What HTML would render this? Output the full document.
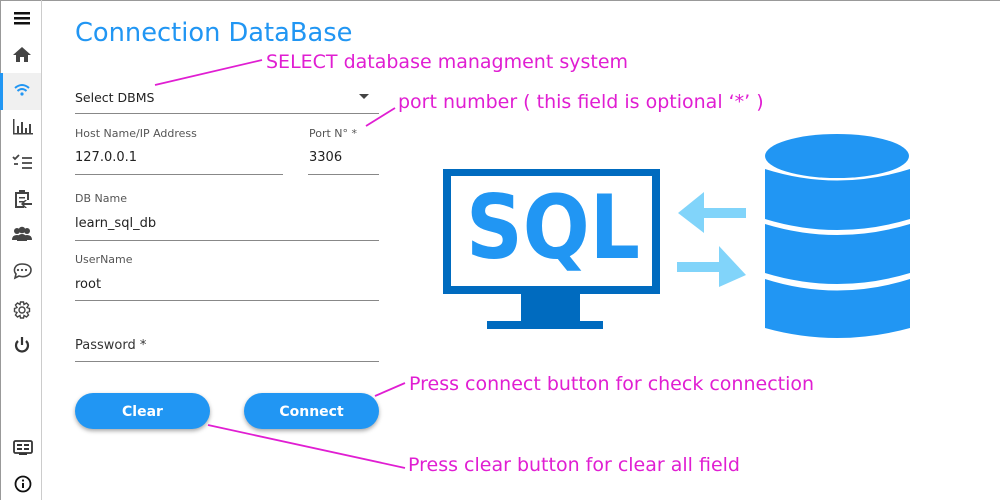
<!DOCTYPE html>
<html><head><meta charset="utf-8"><style>
*{margin:0;padding:0;box-sizing:border-box}
body{width:1000px;height:500px;position:relative;background:#fff;font-family:"DejaVu Sans","Liberation Sans",sans-serif;overflow:hidden}
.frame{position:absolute;left:0;top:0;width:1000px;height:500px;border-top:1px solid #999;border-left:1px solid #999}
.a{position:absolute;white-space:nowrap}
.side{position:absolute;left:0;top:0;width:42px;height:500px;border-right:1px solid #ccc}
.lbl{font-size:11px;color:#555}
.val{font-size:13px;color:#222}
.ul{position:absolute;height:1px;background:#888}
.mg{color:#e01ed2;font-size:19px}
.btn{position:absolute;top:393px;height:36px;width:135px;border-radius:18px;background:#2196f3;color:#fff;font-weight:bold;font-size:14px;text-align:center;line-height:38px;box-shadow:0 2px 4px rgba(0,0,0,.35)}
</style></head><body>
<div class="frame"></div>
<div class="side">
<div style="position:absolute;left:0;top:73px;width:41px;height:37px;background:#f0f0f0"></div>
<div style="position:absolute;left:0;top:73px;width:3px;height:37px;background:#2196f3"></div>
<svg width="42" height="500" style="position:absolute;left:0;top:0" fill="#444" stroke="none">
<rect x="14" y="12" width="16" height="2.5" fill="#111"/><rect x="14" y="17" width="16" height="2.5" fill="#111"/><rect x="14" y="22" width="16" height="2.5" fill="#111"/>
<path d="M22 47 L13 55 H16 V62 H20 V57 H24 V62 H28 V55 H31 Z"/>
<g fill="none" stroke="#2196f3" stroke-width="2"><path d="M15 88 Q22 82 29 88"/><path d="M17.5 91 Q22 87 26.5 91"/></g><circle cx="22" cy="94" r="1.6" fill="#2196f3"/>
<g fill="#444"><rect x="13" y="119" width="1.5" height="15"/><rect x="13" y="133" width="20" height="1.5"/><rect x="17" y="126" width="2" height="7"/><rect x="21" y="122" width="2" height="11"/><rect x="25" y="128" width="2" height="5"/><rect x="29" y="124" width="2" height="9"/></g>
<g fill="none" stroke="#444" stroke-width="1.8"><path d="M13 157 L15 159 L19 155"/><path d="M22 158 H32 M22 163 H32 M22 168 H32 M14 164 H18"/></g>
<path d="M15 192 H19 V190 H25 V192 H29 V200 H27 V194 H17 V206 H24 V208 H15 Z"/><rect x="19" y="197" width="6" height="1.5"/><rect x="19" y="201" width="5" height="1.5"/><path d="M24 203 H32 V205 H24 L27 208 L25 208 L21 204 L25 200 L27 200 Z"/>
<circle cx="17" cy="231" r="3"/><circle cx="22" cy="230" r="3.3"/><circle cx="27" cy="231" r="3"/><path d="M12 240 Q12 235 17 235 Q22 235 22 240 Z M17 241 Q17 234 22 234 Q27 234 27 241 Z M22 240 Q22 235 27 235 Q32 235 32 240 Z"/>
<g fill="none" stroke="#444" stroke-width="1.6"><path d="M22 264 C14 264 13 271 16 274 L15 278 L19 276 C25 278 31 275 31 270 C31 266 27 264 22 264 Z"/></g><circle cx="18" cy="270" r="1.1"/><circle cx="22" cy="270" r="1.1"/><circle cx="26" cy="270" r="1.1"/>
<g fill="none" stroke="#444" stroke-width="1.4"><circle cx="22" cy="310" r="3"/><path d="M20.5 302 H23.5 L24 304.5 L26.5 303 L28.5 305 L27 307.5 L29.5 308.5 V311.5 L27 312.5 L28.5 315 L26.5 317 L24 315.5 L23.5 318 H20.5 L20 315.5 L17.5 317 L15.5 315 L17 312.5 L14.5 311.5 V308.5 L17 307.5 L15.5 305 L17.5 303 L20 304.5 Z"/></g>
<g fill="none" stroke="#333" stroke-width="2.2"><path d="M18 341 A6 6 0 1 0 26 341"/><path d="M22 337 V345"/></g>
<rect x="14" y="441" width="18" height="12" rx="1.5" fill="none" stroke="#333" stroke-width="1.8"/><rect x="17" y="444" width="5" height="2" fill="#333"/><rect x="24" y="444" width="5" height="2" fill="#333"/><rect x="17" y="448" width="5" height="2" fill="#333"/><rect x="24" y="448" width="5" height="2" fill="#333"/><rect x="19" y="453" width="8" height="2" fill="#333"/>
<circle cx="23" cy="484" r="7.5" fill="none" stroke="#111" stroke-width="1.8"/><rect x="22" y="483" width="2" height="5" fill="#111"/><circle cx="23" cy="480.5" r="1.1" fill="#111"/>
</svg>
</div>
<div class="a" style="left:75px;top:18px;font-size:25.7px;color:#2196f3">Connection DataBase</div>
<div class="a val" style="left:75px;top:90px;font-size:12.5px">Select DBMS</div>
<svg class="a" style="left:359px;top:94px" width="10" height="6"><path d="M0 0 H10 L5 5 Z" fill="#444"/></svg>
<div class="ul" style="left:75px;top:113px;width:304px"></div>
<div class="a lbl" style="left:75px;top:127px">Host Name/IP Address</div>
<div class="a val" style="left:75px;top:150px">127.0.0.1</div>
<div class="ul" style="left:75px;top:174px;width:208px"></div>
<div class="a lbl" style="left:309px;top:127px">Port N° *</div>
<div class="a val" style="left:309px;top:150px">3306</div>
<div class="ul" style="left:308px;top:174px;width:71px"></div>
<div class="a lbl" style="left:75px;top:192px">DB Name</div>
<div class="a val" style="left:75px;top:216px">learn_sql_db</div>
<div class="ul" style="left:75px;top:240px;width:304px"></div>
<div class="a lbl" style="left:75px;top:253px">UserName</div>
<div class="a val" style="left:75px;top:277px">root</div>
<div class="ul" style="left:75px;top:300px;width:304px"></div>
<div class="a val" style="left:75px;top:338px;color:#333">Password *</div>
<div class="ul" style="left:75px;top:361px;width:304px"></div>
<div class="btn" style="left:75px">Clear</div>
<div class="btn" style="left:244px">Connect</div>
<svg class="a" style="left:0;top:0" width="1000" height="500">
<g stroke="#e01ed2" stroke-width="1.8"><line x1="155" y1="85" x2="262" y2="60"/><line x1="366" y1="126" x2="395" y2="108"/><line x1="375" y1="396" x2="405" y2="383"/><line x1="208" y1="425" x2="405" y2="468"/></g>
<rect x="443" y="169" width="217" height="125" fill="#006bbf"/><rect x="451" y="176" width="201" height="110" fill="#fff"/>
<rect x="521" y="294" width="59" height="27" fill="#006bbf"/><rect x="487" y="321" width="116" height="8" fill="#006bbf"/>
<text x="466" y="258" font-family="DejaVu Sans,sans-serif" font-weight="bold" font-size="88" fill="#2196f3" textLength="174" lengthAdjust="spacingAndGlyphs">SQL</text>
<path d="M678 213 L704 192 V208 H746 V218 H704 V233 Z" fill="#81d4fa"/>
<path d="M746 275 L719 246 V262 H677 V272 H719 V287 Z" fill="#81d4fa"/>
<ellipse cx="837" cy="156" rx="72" ry="22" fill="#2196f3"/>
<path d="M765 169 Q837 192 910 169 V219 Q837 241 765 219 Z" fill="#2196f3"/>
<path d="M765 224 Q837 246 910 224 V273 Q837 295 765 273 Z" fill="#2196f3"/>
<path d="M765 279 Q837 302 910 279 V328 Q837 348 765 328 Z" fill="#2196f3"/>
</svg>
<div class="a mg" style="left:266px;top:51px">SELECT database managment system</div>
<div class="a mg" style="left:398px;top:91px">port number ( this field is optional ‘*’ )</div>
<div class="a mg" style="left:409px;top:373px">Press connect button for check connection</div>
<div class="a mg" style="left:408px;top:454px">Press clear button for clear all field</div>
</body></html>
